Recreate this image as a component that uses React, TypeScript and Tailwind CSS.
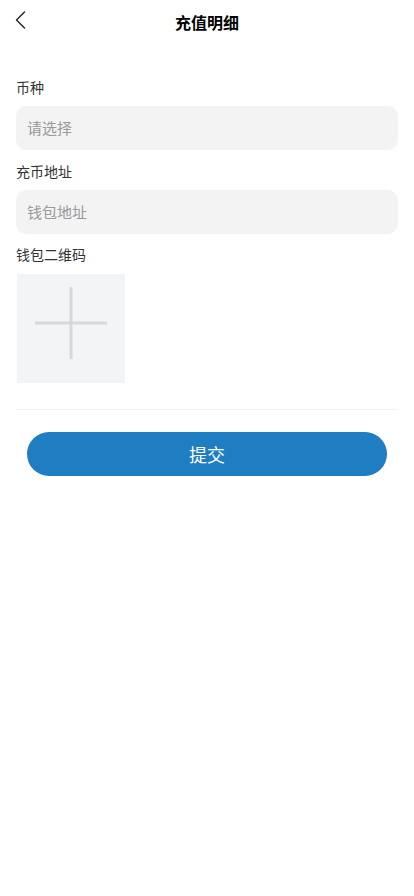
import React from "react";

export default function App() {
  const font = { fontFamily: '"Noto Sans CJK SC", "Noto Sans", sans-serif' };
  return (
    <div className="w-[414px] min-h-[896px] bg-white" style={font}>
      <div className="relative h-[44px] flex items-center justify-center">
        <button className="absolute left-[12px] top-[10px] w-[16px] h-[20px] flex items-center justify-center">
          <svg width="12" height="18" viewBox="0 0 12 18" fill="none">
            <path d="M10.5 1 L2.5 9 L10.5 17" stroke="#222" strokeWidth="1.4" strokeLinecap="round" strokeLinejoin="round" />
          </svg>
        </button>
        <h1 className="text-[16px] font-bold text-black leading-none">充值明细</h1>
      </div>
      <div className="px-[16px] pt-[33px]">
        <div className="text-[14px] text-[#333] leading-[20px]">币种</div>
        <div className="mt-[9px] h-[44px] rounded-[10px] bg-[#f3f3f3] flex items-center px-[11px] text-[15px] text-[#999]">请选择</div>
        <div className="mt-[11px] text-[14px] text-[#333] leading-[20px]">充币地址</div>
        <div className="mt-[9px] h-[44px] rounded-[10px] bg-[#f3f3f3] flex items-center px-[11px] text-[15px] text-[#999]">钱包地址</div>
        <div className="mt-[10px] text-[14px] text-[#333] leading-[20px]">钱包二维码</div>
        <div className="mt-[10px] w-[108px] h-[109px] bg-[#f3f4f5] ml-[1px] flex justify-center pt-[13px]">
          <svg width="72" height="72" viewBox="0 0 72 72">
            <path d="M36 1 L36 71 M1 36 L71 36" stroke="#d3d9dd" strokeWidth="3" strokeLinecap="round" />
          </svg>
        </div>
        <div className="mt-[26px] h-px bg-[#f2f2f2]" />
        <div className="px-[11px] mt-[22px]">
          <button className="w-full h-[44px] rounded-full bg-[#1f7dc1] text-white text-[18px] flex items-center justify-center">提交</button>
        </div>
      </div>
    </div>
  );
}
